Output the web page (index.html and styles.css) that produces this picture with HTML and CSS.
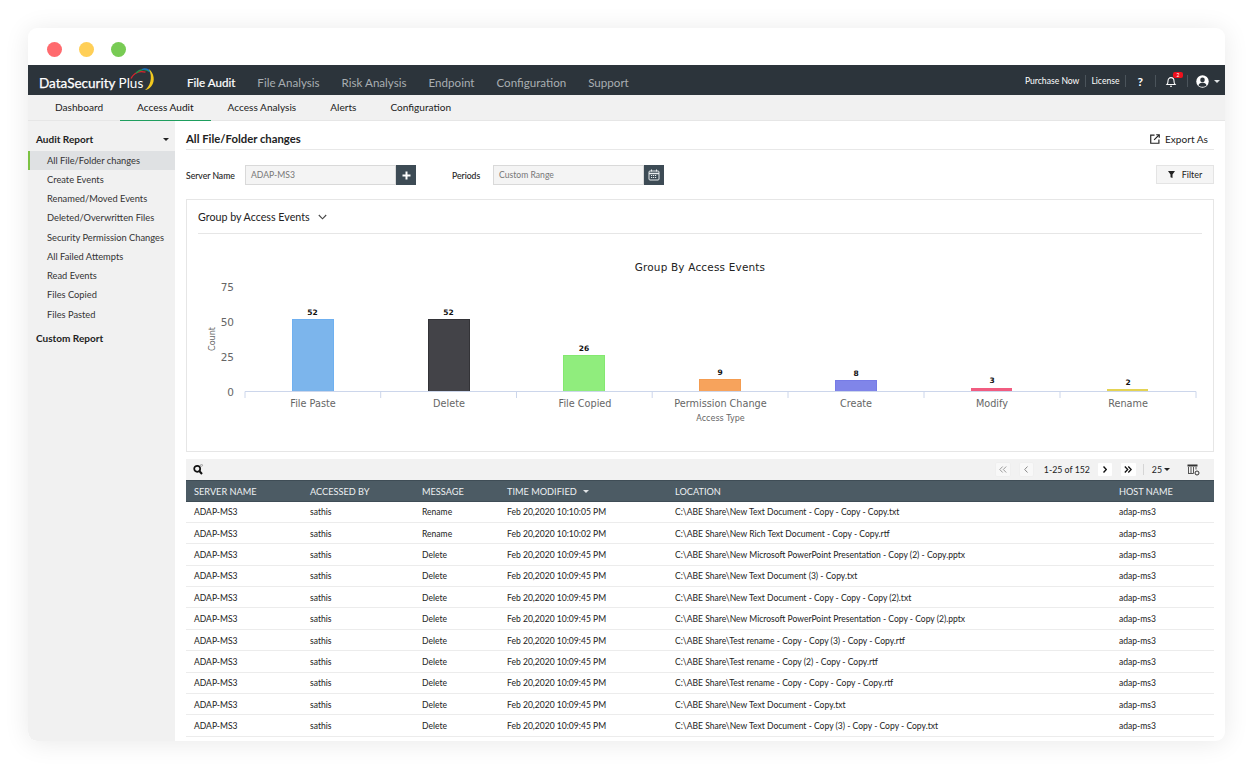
FILE: index.html
```html
<!DOCTYPE html>
<html lang="en">
<head>
<meta charset="utf-8">
<title>DataSecurity Plus</title>
<link rel="stylesheet" href="styles.css">
</head>
<body>
<div class="window">
  <div class="titlebar">
    <span class="dot red"></span><span class="dot yellow"></span><span class="dot green"></span>
  </div>
  <header class="topbar">
    <div class="logo"><span class="logo-text"><b>DataSecurity</b> Plus</span>
      <svg class="logo-mark" width="26" height="26" viewBox="0 0 26 26" fill="none">
        <path d="M1 10.500C4 4.500 10 2.800 15.500 4.200" stroke="#d8262c" stroke-width="1.300"/>
        <path d="M6 5C10 .8 16 .5 19.500 3.500" stroke="#1d9a4a" stroke-width="1.300"/>
        <path d="M12 1.500C16 .2 19.500 2 21.500 6" stroke="#1a6fc0" stroke-width="1.300"/>
        <path d="M19 1C24 5 25.500 13 21.500 18C19.500 20.800 17 22 15 22C20 18.500 23 10 19 1Z" fill="#f2c81e"/>
      </svg>
    </div>
    <nav class="mainnav">
      <a class="active">File Audit</a><a>File Analysis</a><a>Risk Analysis</a><a>Endpoint</a><a>Configuration</a><a>Support</a>
    </nav>
    <div class="toptools">
      <a class="tool-link">Purchase Now</a><i class="sep tight"></i><a class="tool-link">License</a><i class="sep"></i>
      <a class="help">?</a><i class="sep"></i>
      <span class="bell">
        <svg width="12" height="13" viewBox="0 0 12 13" fill="none" stroke="#fff" stroke-width="1.100"><path d="M2 9.500C3 8.500 3 7.500 3 6C3 4 4.300 2.600 6 2.600S9 4 9 6C9 7.500 9 8.500 10 9.500Z"/><path d="M5 11.200H7"/></svg>
        <b class="badge">2</b>
      </span><i class="sep"></i>
      <span class="user">
        <svg width="13" height="13" viewBox="0 0 13 13"><circle cx="6.500" cy="6.500" r="6.200" fill="#fff"/><circle cx="6.500" cy="4.900" r="2.300" fill="#2c343b"/><path d="M2.400 10.200C3.200 8.300 4.800 7.800 6.500 7.800S9.800 8.300 10.600 10.200C8.600 12.200 4.400 12.200 2.400 10.200Z" fill="#2c343b"/></svg>
        <i class="caret light"></i>
      </span>
    </div>
  </header>
  <nav class="subnav">
    <a>Dashboard</a><a class="active">Access Audit</a><a>Access Analysis</a><a>Alerts</a><a>Configuration</a>
  </nav>
  <div class="body">
    <aside class="sidebar">
      <div class="side-head"><span>Audit Report</span><i class="caret"></i></div>
      <ul class="side-list">
        <li class="active">All File/Folder changes</li>
        <li>Create Events</li>
        <li>Renamed/Moved Events</li>
        <li>Deleted/Overwritten Files</li>
        <li>Security Permission Changes</li>
        <li>All Failed Attempts</li>
        <li>Read Events</li>
        <li>Files Copied</li>
        <li>Files Pasted</li>
      </ul>
      <div class="side-head second">Custom Report</div>
    </aside>
    <main class="content">
      <div class="page-head">
        <h1>All File/Folder changes</h1>
        <a class="export">
          <svg width="10" height="10" viewBox="0 0 11 11" fill="none" stroke="#222" stroke-width="1.300"><path d="M5 1.200H.8V10.200H9.800V6"/><path d="M4.500 6.500L10 1M6.800 .8H10.200V4.200"/></svg>
          Export As
        </a>
      </div>
      <div class="filters">
        <label class="f-label">Server Name</label>
        <div class="field"><span>ADAP-MS3</span></div>
        <button class="f-btn"><svg width="9" height="9" viewBox="0 0 9 9"><path d="M4.500 .5V8.500M.5 4.500H8.500" stroke="#fff" stroke-width="2"/></svg></button>
        <label class="f-label periods">Periods</label>
        <div class="field"><span>Custom Range</span></div>
        <button class="f-btn"><svg width="12" height="12" viewBox="0 0 12 12" fill="none" stroke="#e8ecee"><rect x="1" y="2" width="10" height="9" rx="1"/><path d="M1 4.500H11" stroke-width="1.600"/><path d="M3.500 .5V2.500M8.500 .5V2.500"/><path d="M3 6.500H9M3 8.500H9" stroke-dasharray="1.200 .8"/></svg></button>
        <button class="filter-btn"><svg width="7" height="7" viewBox="0 0 9 9"><path d="M0 0H9L5.800 4.500V9L3.200 8V4.500Z" fill="#222"/></svg>Filter</button>
      </div>
      <section class="panel">
        <div class="panel-head">Group by Access Events
          <svg width="9" height="6" viewBox="0 0 9 6" fill="none" stroke="#444" stroke-width="1.100"><path d="M.8 1L4.500 4.800L8.200 1"/></svg>
        </div>
        <svg class="chart" width="1026" height="217" viewBox="187 234 1026 217">
          <text class="c-title" x="700" y="271" text-anchor="middle">Group By Access Events</text>
          <g class="c-y" text-anchor="end">
            <text x="234" y="291">75</text><text x="234" y="326">50</text><text x="234" y="361">25</text><text x="234" y="396">0</text>
          </g>
          <text class="c-count" transform="translate(215 339) rotate(-90)" text-anchor="middle">Count</text>
          <g class="c-bars">
            <rect x="292.500" y="319.500" width="41" height="72" fill="#7cb5ec" stroke="#6fb0f0"/>
            <rect x="428.500" y="319.500" width="41" height="72" fill="#434348" stroke="#333337"/>
            <rect x="563.500" y="355.500" width="41" height="36" fill="#90ed7d" stroke="#84e870"/>
            <rect x="699.500" y="379.500" width="41" height="12" fill="#f7a35c" stroke="#f49c50"/>
            <rect x="835.500" y="380.500" width="41" height="11" fill="#8085e9" stroke="#767be6"/>
            <rect x="971" y="388" width="41" height="3.500" fill="#f15c80"/>
            <rect x="1107" y="389" width="41" height="2.500" fill="#e4d354"/>
          </g>
          <path class="c-axis" d="M245 391.500H1196M245 391.500V398M380.700 391.500V398M516.500 391.500V398M652.200 391.500V398M788 391.500V398M924 391.500V398M1060 391.500V398M1196 391.500V398"/>
          <g class="c-val" text-anchor="middle">
            <text x="312.500" y="314.500">52</text><text x="448.500" y="314.500">52</text><text x="584" y="350.500">26</text><text x="720" y="374.500">9</text><text x="856" y="375.500">8</text><text x="992" y="382.500">3</text><text x="1128" y="384.500">2</text>
          </g>
          <g class="c-x" text-anchor="middle">
            <text x="313" y="407">File Paste</text><text x="449" y="407">Delete</text><text x="585" y="407">File Copied</text><text x="720.500" y="407">Permission Change</text><text x="856" y="407">Create</text><text x="992" y="407">Modify</text><text x="1128" y="407">Rename</text>
          </g>
          <text class="c-atitle" x="720.500" y="421" text-anchor="middle">Access Type</text>
        </svg>
      </section>
      <div class="tbar">
        <svg class="search" width="11" height="11" viewBox="0 0 11 11" fill="none" stroke="#111"><circle cx="4.200" cy="4.800" r="3" stroke-width="1.700"/><path d="M6.500 7.300L9 10" stroke-width="2"/><circle cx="8.500" cy="1.300" r="1" stroke="#888" stroke-width=".7"/></svg>
        <div class="pager">
          <span class="pg off first"><svg width="8" height="7" viewBox="0 0 8 7" fill="none" stroke="#999"><path d="M3.700 .5L.8 3.500L3.700 6.500M7.200 .5L4.300 3.500L7.200 6.500"/></svg></span>
          <span class="pg off prev"><svg width="4" height="7" viewBox="0 0 4 7" fill="none" stroke="#888"><path d="M3.500 .5L.7 3.500L3.500 6.500"/></svg></span>
          <span class="pg-text">1-25 of 152</span>
          <span class="pg next"><svg width="4" height="7" viewBox="0 0 4 7" fill="none" stroke="#111" stroke-width="1.400"><path d="M.5 .5L3.300 3.500L.5 6.500"/></svg></span>
          <span class="pg last"><svg width="8" height="7" viewBox="0 0 8 7" fill="none" stroke="#111" stroke-width="1.300"><path d="M.8 .5L3.700 3.500L.8 6.500M4.300 .5L7.200 3.500L4.300 6.500"/></svg></span>
          <i class="sep dark"></i>
          <span class="pg-size">25<i class="caret"></i></span>
          <svg class="cols" width="13" height="12" viewBox="0 0 13 12" fill="none"><path d="M.5 1.500H10.500" stroke="#333" stroke-width="2"/><path d="M1.500 3V9.500M4 3V9.500M6.500 3V9.500H1M9 3V5.500" stroke="#555"/><circle cx="10" cy="9" r="2" stroke="#333"/></svg>
        </div>
      </div>
      <div class="tbl">
        <div class="row thead"><span>SERVER NAME</span><span>ACCESSED BY</span><span>MESSAGE</span><span>TIME MODIFIED<i class="caret light sort"></i></span><span>LOCATION</span><span>HOST NAME</span></div>
        <div class="row"><span>ADAP-MS3</span><span>sathis</span><span>Rename</span><span>Feb 20,2020 10:10:05 PM</span><span>C:\ABE Share\New Text Document - Copy - Copy - Copy.txt</span><span>adap-ms3</span></div>
        <div class="row"><span>ADAP-MS3</span><span>sathis</span><span>Rename</span><span>Feb 20,2020 10:10:02 PM</span><span>C:\ABE Share\New Rich Text Document - Copy - Copy.rtf</span><span>adap-ms3</span></div>
        <div class="row"><span>ADAP-MS3</span><span>sathis</span><span>Delete</span><span>Feb 20,2020 10:09:45 PM</span><span>C:\ABE Share\New Microsoft PowerPoint Presentation - Copy (2) - Copy.pptx</span><span>adap-ms3</span></div>
        <div class="row"><span>ADAP-MS3</span><span>sathis</span><span>Delete</span><span>Feb 20,2020 10:09:45 PM</span><span>C:\ABE Share\New Text Document (3) - Copy.txt</span><span>adap-ms3</span></div>
        <div class="row"><span>ADAP-MS3</span><span>sathis</span><span>Delete</span><span>Feb 20,2020 10:09:45 PM</span><span>C:\ABE Share\New Text Document - Copy - Copy - Copy (2).txt</span><span>adap-ms3</span></div>
        <div class="row"><span>ADAP-MS3</span><span>sathis</span><span>Delete</span><span>Feb 20,2020 10:09:45 PM</span><span>C:\ABE Share\New Microsoft PowerPoint Presentation - Copy - Copy (2).pptx</span><span>adap-ms3</span></div>
        <div class="row"><span>ADAP-MS3</span><span>sathis</span><span>Delete</span><span>Feb 20,2020 10:09:45 PM</span><span>C:\ABE Share\Test rename - Copy - Copy (3) - Copy - Copy.rtf</span><span>adap-ms3</span></div>
        <div class="row"><span>ADAP-MS3</span><span>sathis</span><span>Delete</span><span>Feb 20,2020 10:09:45 PM</span><span>C:\ABE Share\Test rename - Copy (2) - Copy - Copy.rtf</span><span>adap-ms3</span></div>
        <div class="row"><span>ADAP-MS3</span><span>sathis</span><span>Delete</span><span>Feb 20,2020 10:09:45 PM</span><span>C:\ABE Share\Test rename - Copy - Copy - Copy - Copy.rtf</span><span>adap-ms3</span></div>
        <div class="row"><span>ADAP-MS3</span><span>sathis</span><span>Delete</span><span>Feb 20,2020 10:09:45 PM</span><span>C:\ABE Share\New Text Document - Copy.txt</span><span>adap-ms3</span></div>
        <div class="row"><span>ADAP-MS3</span><span>sathis</span><span>Delete</span><span>Feb 20,2020 10:09:45 PM</span><span>C:\ABE Share\New Text Document - Copy (3) - Copy - Copy - Copy.txt</span><span>adap-ms3</span></div>
      </div>
    </main>
  </div>
</div>
</body>
</html>
```
FILE: styles.css
```css
* { box-sizing: border-box; }
html, body { margin: 0; height: 100%; }
body { background: #fff; padding: 28px 29px 25px 28px; font-family: Lato, "Liberation Sans", sans-serif; color: #222; overflow: hidden; }
.window { width: 1197px; height: 713px; border-radius: 9px; background: #fff; box-shadow: 0 2px 26px rgba(0,0,0,.09); display: flex; flex-direction: column; overflow: hidden; }
.titlebar { height: 37px; flex: none; display: flex; align-items: center; gap: 17px; padding: 5px 0 0 19px; }
.dot { width: 15px; height: 15px; border-radius: 50%; }
.red { background: #ff6a6e; }
.yellow { background: #ffcf57; }
.green { background: #78cb54; }

.topbar { height: 30px; flex: none; background: #2c343b; display: flex; align-items: center; color: #fff; }
.logo { width: 159px; height: 30px; padding: 5px 0 0 11px; display: flex; align-items: center; position: relative; }
.logo-text { font-size: 13.500px; color: #fff; white-space: nowrap; }
.logo-text b { font-weight: 400; -webkit-text-stroke: .25px #fff; }
.logo-mark { position: absolute; left: 102px; top: 3px; }
.mainnav { display: flex; gap: 22px; font-size: 11.600px; color: #a9aeb2; padding-top: 5px; }
.mainnav .active { color: #fff; -webkit-text-stroke: .2px #fff; }
.toptools { margin-left: auto; display: flex; align-items: center; font-size: 8.600px; padding: 2px 5px 0 0; }
.tool-link { color: #fff; }
.sep { display: block; width: 1px; height: 12px; background: #4b545b; margin: 0 6px; }
.sep.tight { margin: 0 5px 0 6px; }
.sep.dark { background: #d5d5d5; height: 11px; margin: 0 8px 0 7px; }
.help { font-size: 12px; font-weight: 700; margin: 0 6px 0 5px; }
.bell { position: relative; display: flex; margin: 0 4px 0 3px; }
.badge { position: absolute; left: 8px; top: -3px; width: 10px; height: 6px; background: #f0101c; border-radius: 2px; font-size: 5px; line-height: 6px; text-align: center; font-weight: 400; }
.user { display: flex; align-items: center; gap: 5px; margin-left: 2px; }
.caret { display: inline-block; width: 0; height: 0; border: 3px solid transparent; border-top: 3.500px solid #222; border-bottom: 0; }
.caret.light { border-top-color: #dfe3e6; }
.sort { margin-left: 6px; vertical-align: 2px; }

.subnav { height: 26px; flex: none; background: #f1f1f1; display: flex; font-size: 10.100px; padding-left: 10px; color: #222; border-bottom: 1px solid #e6e6e6; }
.subnav a { display: flex; align-items: center; padding: 0 17px 2px; height: 26px; }
.subnav .active { border-bottom: 1.500px solid #1e9e5e; color: #111; }

.body { flex: 1; display: flex; min-height: 0; }
.sidebar { width: 147px; flex: none; background: #f1f1f1; padding-top: 10px; font-size: 9.300px; color: #333; border-radius: 0 0 0 9px; }
.side-head { display: flex; align-items: center; justify-content: space-between; padding: 0 6px 0 8px; height: 16px; font-size: 10px; font-weight: 700; color: #222; }
.side-head.second { margin-top: 6.500px; }
.side-list { list-style: none; margin: 3.500px 0 0; padding: 0; }
.side-list li { height: 19.250px; line-height: 19.250px; padding-left: 19px; }
.side-list .active { background: #dfe1e3; border-left: 2px solid #7cc243; padding-left: 17px; }

.content { flex: 1; min-width: 0; padding: 0 11px; overflow: hidden; }
.page-head { height: 29px; display: flex; align-items: center; justify-content: space-between; border-bottom: 1px solid #e8e8e8; padding: 7px 6px 0 0; }
h1 { margin: 0; font-size: 11.300px; font-weight: 700; color: #222; }
.export { display: flex; align-items: center; gap: 5px; font-size: 10.100px; color: #222; }
.filters { display: flex; align-items: center; height: 20px; margin-top: 15px; font-size: 8.650px; }
.f-label { width: 59px; color: #222; -webkit-text-stroke: .1px #222; }
.f-label.periods { width: 41px; margin-left: 36px; }
.field { width: 151px; height: 20px; background: #f4f4f4; border: 1px solid #d9d9d9; padding-left: 5px; line-height: 18px; color: #777; }
.f-btn { width: 20px; height: 20px; padding: 0; border: 0; background: #3d4b55; display: flex; align-items: center; justify-content: center; }
.filter-btn { margin-left: auto; align-self: flex-start; width: 58px; height: 19px; padding: 0; border: 1px solid #e4e4e4; background: #f5f5f5; font: 9px Lato, sans-serif; color: #222; display: flex; align-items: center; justify-content: center; gap: 7px; }

.panel { margin-top: 14px; height: 253px; border: 1px solid #e6e6e6; position: relative; }
.panel-head { margin: 0 11px; height: 34px; display: flex; align-items: center; gap: 8px; font-size: 10.700px; color: #222; border-bottom: 1px solid #e6e6e6; }
.chart { display: block; font-family: "DejaVu Sans", sans-serif; }
.c-title { font-size: 10.450px; fill: #222; letter-spacing: .2px; }
.c-y { font-size: 10.500px; fill: #666; }
.c-count { font-size: 8px; fill: #666; }
.c-x { font-size: 9.700px; fill: #666; }
.c-atitle { font-size: 8px; fill: #666; }
.c-val { font-size: 7.500px; fill: #111; font-weight: 700; }
.c-axis { fill: none; stroke: #ccd6eb; stroke-width: 1; }

.tbar { margin-top: 7px; height: 21px; background: #f2f2f2; display: flex; align-items: center; padding: 0 14px 0 7px; justify-content: space-between; }
.search { display: block; }
.pager { display: flex; align-items: center; font-size: 8.800px; color: #222; }
.pg { width: 14px; height: 13px; background: #fff; border-radius: 1px; display: flex; align-items: center; justify-content: center; }
.pg.off { background: #f8f8f8; box-shadow: 0 0 0 .5px #ececec; }
.first { margin-right: 10px; }
.prev { margin-right: 11px; width: 13px; }
.next { margin-left: 10px; margin-right: 9px; }
.last { width: 15px; }
.pg-text { width: 44px; white-space: nowrap; }
.pg-size { display: flex; align-items: center; gap: 2px; margin-right: 17px; }
.cols { display: block; }

.row { display: grid; grid-template-columns: 116px 112px 85px 168px 444px 95px; height: 21.400px; align-items: center; padding: 1px 0 0 8px; font-size: 8.560px; color: #222; border-bottom: 1px solid #ececec; white-space: nowrap; }
.thead { height: 21.500px; background: #4c5b64; color: #eef1f3; font-size: 9.200px; border-bottom: 1px solid #3f4d56; border-top: 1px solid #3f4d56; }
```
